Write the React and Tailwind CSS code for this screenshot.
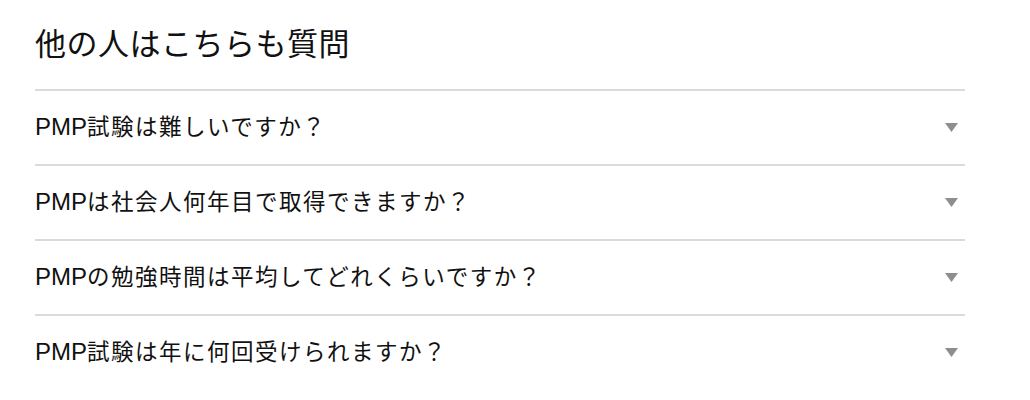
const questions = [
  "試験は難しいですか？",
  "は社会人何年目で取得できますか？",
  "の勉強時間は平均してどれくらいですか？",
  "試験は年に何回受けられますか？",
];

const Caret = () => (
  <svg width="13" height="9" viewBox="0 0 13 9" className="shrink-0">
    <path d="M0 0h13L6.5 9z" fill="#8e8e8e" />
  </svg>
);

const App = () => {
  return (
    <div
      className="w-[1030px] h-[400px] bg-white text-[#202124] overflow-hidden"
      style={{ fontFamily: '"Liberation Sans", "Noto Sans CJK JP", sans-serif' }}
    >
      <div className="ml-[35px] w-[930px]">
        <h2 className="pt-[25px] pb-[24px] text-[31px] leading-[40px] tracking-[0.5px] font-normal text-[#111]">
          他の人はこちらも質問
        </h2>
        {questions.map((q) => (
          <div
            key={q}
            className="flex items-center justify-between h-[75px] border-t-2 border-[#dadada] pr-[7px]"
          >
            <span className="text-[22.5px] leading-[30px] text-[#111]">
              <span className="text-[24px] tracking-normal">PMP</span>
              <span className="tracking-[1.5px]">{q}</span>
            </span>
            <Caret />
          </div>
        ))}
      </div>
    </div>
  );
};

export default App;
